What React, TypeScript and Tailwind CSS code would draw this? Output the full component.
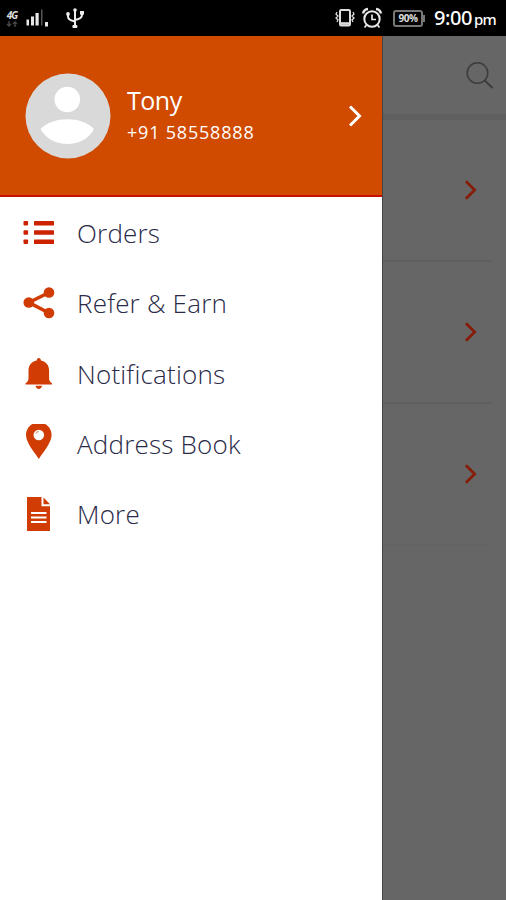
import type { ReactNode } from "react";

interface MenuItem {
  label: string;
  icon: ReactNode;
  textClass: string;
}

const menuItems: MenuItem[] = [
  {
    label: "Orders",
    textClass: "tracking-[0.2px]",
    icon: (
      <svg viewBox="0 0 34 40" className="h-10 w-[34px]" fill="#cc2200">
        {[8, 17.3, 26.5].map((y) => (
          <g key={y}>
            <rect x="1.5" y={y} width="4.6" height="4.4" rx="0.8" />
            <rect x="12" y={y} width="20" height="4.4" rx="0.4" />
          </g>
        ))}
      </svg>
    ),
  },
  {
    label: "Refer & Earn",
    textClass: "tracking-[0.2px]",
    icon: (
      <svg viewBox="0 0 34 40" className="h-10 w-[34px]" fill="#d03c04">
        <path d="M27 9.5 7 19.5 27 30" fill="none" stroke="#d03c04" strokeWidth="3.6" />
        <circle cx="27" cy="9.5" r="5.3" />
        <circle cx="6.8" cy="19.5" r="5.3" />
        <circle cx="27" cy="30" r="5.3" />
      </svg>
    ),
  },
  {
    label: "Notifications",
    textClass: "tracking-[0.2px]",
    icon: (
      <svg viewBox="0 0 34 40" className="h-10 w-[34px]" fill="#d03c04">
        <path d="M16.8 4c1.3 0 2 1 2.1 2.4 5.2 1 8.2 4.6 8.2 10.3v7.8c0 2.1 1.2 3.7 3 4.8v1.2H3.5v-1.2c1.8-1.1 3-2.7 3-4.8v-7.8c0-5.700 3-9.300 8.200-10.300C14.800 5 15.500 4 16.800 4z" />
        <path d="M13.500 31.800h6.600c-.4 2-1.600 3.200-3.300 3.200s-2.900-1.200-3.300-3.200z" />
      </svg>
    ),
  },
  {
    label: "Address Book",
    textClass: "tracking-[0.2px]",
    icon: (
      <svg viewBox="0 0 34 40" className="h-10 w-[34px]">
        <path
          d="M16.800 -1.500C9.500 -1.500 4 4 4 10.800c0 7.600 7.300 16 12.800 24.200C22.300 26.800 29.600 18.400 29.600 10.800 29.600 4 24.100 -1.500 16.800 -1.500z"
          fill="#d03c04"
        />
        <circle cx="16.800" cy="11" r="5.300" fill="white" />
        <path d="M14 9.500c.5-1.300 1.500-2 2.800-2.100" fill="none" stroke="#e0a080" strokeWidth="1.200" />
      </svg>
    ),
  },
  {
    label: "More",
    textClass: "tracking-[0.2px]",
    icon: (
      <svg viewBox="0 0 34 40" className="h-10 w-[34px]" fill="#d03c04">
        <path d="M5 3h14.500v9.200H28V37H5z" />
        <path d="M21.500 3.500v6.700H28z" />
        <path d="M9 19h15.500M9 23.500h15.500M9 28h15.500" stroke="white" strokeWidth="1.900" />
      </svg>
    ),
  },
];

function Chevron({ className }: { className: string }) {
  return (
    <svg viewBox="0 0 14 24" className={className} fill="none" stroke="currentColor">
      <path d="M2 2.500 11.500 12 2 21.500" strokeWidth="3" />
    </svg>
  );
}

function StatusBar() {
  return (
    <header className="flex h-9 shrink-0 items-center bg-black text-white">
      <div className="ml-1 flex w-4 flex-col items-center">
        <span className="text-[10px] font-bold italic leading-[10px] tracking-[-1px] text-[#ddd]">4G</span>
        <svg viewBox="0 0 12 6" className="mt-px h-[6px] w-3" fill="none" stroke="#444" strokeWidth="1.500">
          <path d="M3 0v5M1 3l2 2 2-2M9 6V1M7 3l2-2 2 2" />
        </svg>
      </div>
      <svg viewBox="0 0 24 20" className="ml-1.5 h-5 w-6" fill="#e8e8e8">
        <rect x="0.500" y="11.500" width="2.500" height="6" />
        <rect x="5" y="8.500" width="3" height="9" />
        <rect x="9.500" y="5" width="3.200" height="12.500" />
        <rect x="15" y="1.500" width="1.500" height="16" fill="#555" />
        <rect x="19" y="14" width="3" height="4.500" />
      </svg>
      <svg viewBox="0 0 20 24" className="ml-[15px] h-6 w-5" fill="none" stroke="#eee" strokeWidth="2">
        <path d="M10 3v17M3 8v2.500c0 2.500 2 4 7 5M17 7v2c0 2.500-2 4-7 5" />
        <circle cx="10" cy="4" r="1.800" fill="#eee" stroke="none" />
        <circle cx="3" cy="8" r="1.900" fill="#eee" stroke="none" />
        <rect x="15" y="5" width="4" height="3.600" fill="#eee" stroke="none" />
        <rect x="7.400" y="19" width="5" height="3" rx="1" fill="#eee" stroke="none" />
      </svg>
      <svg viewBox="0 0 20 20" className="ml-auto h-5 w-5" fill="none" stroke="#ddd" strokeWidth="1.600">
        <rect x="5" y="2" width="10" height="15.500" rx="1.200" strokeWidth="2" />
        <path d="M5 15.500h10" strokeWidth="2.600" />
        <path d="m2 4-1 2 2 2-2 2 2 2-1 2M18 4l1 2-2 2 2 2-2 2 1 2" strokeWidth="1.300" />
      </svg>
      <svg viewBox="0 0 22 24" className="ml-[6px] h-6 w-[22px]" fill="none" stroke="#e8e8e8" strokeWidth="2">
        <circle cx="11" cy="13" r="7.700" />
        <path d="M11 8.500V13.500h4M5.500 19l-2 2.500M16.500 19l2 2.500" strokeWidth="1.700" />
        <path d="M2 7.500C2.500 5 4.500 3.300 7 3M20 7.500C19.500 5 17.500 3.300 15 3" strokeWidth="2.300" />
      </svg>
      <div className="ml-[10px] flex h-[17px] w-[30px] items-center justify-center rounded-[3px] border-2 border-[#777]">
        <span className="text-[10px] font-bold leading-none tracking-[-0.5px] text-[#ddd]">90%</span>
      </div>
      <span className="h-[7px] w-[2px] bg-[#777]" />
      <div className="ml-[9px] mr-[10px] flex w-[62px] items-baseline justify-between font-['Noto_Sans'] font-medium">
        <span className="text-[20px] leading-6 tracking-[-0.4px]">9:00</span>
        <span className="text-[15px] leading-6 tracking-[-0.8px]">pm</span>
      </div>
    </header>
  );
}

function Drawer() {
  return (
    <aside className="w-[382px] shrink-0 bg-white">
      <div className="flex h-[161px] items-center border-b-2 border-[#c81000] bg-[#d04a00] pl-[25px] pr-5 text-white">
        <svg viewBox="0 0 86 86" className="h-[86px] w-[86px]">
          <circle cx="43" cy="43" r="42.500" fill="#d9d9d9" />
          <circle cx="42.300" cy="26.500" r="12.800" fill="white" />
          <path d="M15.500 56C28 43 57 43 69 56 59 76 26 76 15.500 56z" fill="white" />
        </svg>
        <div className="ml-4 flex flex-col">
          <span className="text-[25px] font-medium leading-8 tracking-[-0.5px]">Tony</span>
          <span className="text-[18px] leading-8 tracking-[0.8px]">+91 58558888</span>
        </div>
        <Chevron className="ml-auto h-6 w-[14px]" />
      </div>
      <nav className="flex flex-col pt-px">
        {menuItems.map((item) => (
          <div key={item.label} className="flex h-[70.3px] items-center pl-[22px]">
            {item.icon}
            <span className={`ml-[21px] whitespace-nowrap text-[26px] font-light leading-9 text-[#2a2a48] ${item.textClass}`}>
              {item.label}
            </span>
          </div>
        ))}
      </nav>
    </aside>
  );
}

// Screen behind the drawer, dimmed
function DimmedPage() {
  return (
    <main className="flex-1 border-l border-[#444] bg-[#666]">
      <div className="flex h-[84px] justify-end border-b-[6px] border-[#5f5f5f] pr-3 pt-[25px]">
        <svg viewBox="0 0 28 28" className="h-7 w-7" fill="none" stroke="#3c3c3c" strokeWidth="1.500">
          <circle cx="11.500" cy="12" r="10.300" />
          <path d="m18.800 19.500 7.700 7.500" strokeWidth="1.800" />
        </svg>
      </div>
      {[0, 1, 2].map((row) => (
        <div
          key={row}
          className={`mr-[14px] flex h-[142px] items-center justify-end border-b-2 pr-[15px] ${
            row === 2 ? "border-[#646464]" : "border-[#5e5e5e]"
          }`}
        >
          <Chevron className="h-[22px] w-[13px] text-[#861c0a]" />
        </div>
      ))}
    </main>
  );
}

export default function App() {
  return (
    <div className="flex h-[900px] w-[506px] flex-col overflow-hidden font-['Open_Sans',sans-serif]">
      <StatusBar />
      <div className="flex flex-1">
        <Drawer />
        <DimmedPage />
      </div>
    </div>
  );
}
